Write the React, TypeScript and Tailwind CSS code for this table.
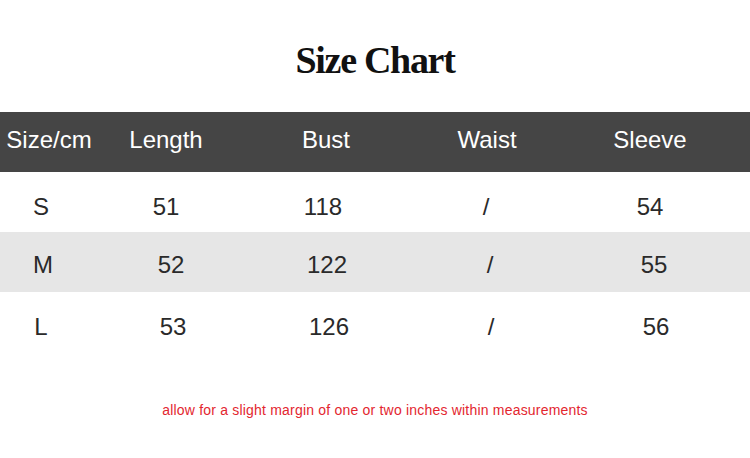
const cols = ["w-[98px]", "w-[136px]", "w-[184px]", "w-[138px]", "w-[188px]"];

const header = ["Size/cm", "Length", "Bust", "Waist", "Sleeve"];

const rows = [
  { cells: ["S", "51", "118", "/", "54"], shift: ["-ml-[16px]", "ml-0", "-ml-[6px]", "-ml-[2px]", "ml-0"], bg: "bg-white", pt: "pt-[9px]" },
  { cells: ["M", "52", "122", "/", "55"], shift: ["-ml-[12px]", "ml-[10px]", "ml-[2px]", "ml-[6px]", "ml-[8px]"], bg: "bg-[#e6e6e6]", pt: "pt-[5px]" },
  { cells: ["L", "53", "126", "/", "56"], shift: ["-ml-[16px]", "ml-[14px]", "ml-[6px]", "ml-[8px]", "ml-[12px]"], bg: "bg-white", pt: "pt-[9px]" },
];

export default function App() {
  return (
    <div className="w-[750px] h-[458px] bg-white overflow-hidden font-['Liberation_Sans',Arial,sans-serif]">
      <div className="h-[112px] flex justify-center pt-[40px]">
        <h1 className="font-['Liberation_Serif',serif] font-bold text-[38px] leading-[40px] tracking-[-1.3px] text-[#111]">
          Size Chart
        </h1>
      </div>

      <div className="h-[60px] bg-[#454545] flex items-center pb-[4px] text-white text-[24px]">
        {header.map((h, i) => (
          <div key={h} className={`${cols[i]} text-center`}>
            {h}
          </div>
        ))}
      </div>

      {rows.map((r) => (
        <div key={r.cells[0]} className={`h-[60px] ${r.bg} ${r.pt} flex items-center text-[#2a2a2a] text-[24px]`}>
          {r.cells.map((c, i) => (
            <div key={i} className={`${cols[i]} flex justify-center`}>
              <span className={r.shift[i]}>{c}</span>
            </div>
          ))}
        </div>
      ))}

      <div className="pt-[48px] text-center text-[14px] tracking-[0.2px] text-[#e3262f]">
        allow for a slight margin of one or two inches within measurements
      </div>
    </div>
  );
}
